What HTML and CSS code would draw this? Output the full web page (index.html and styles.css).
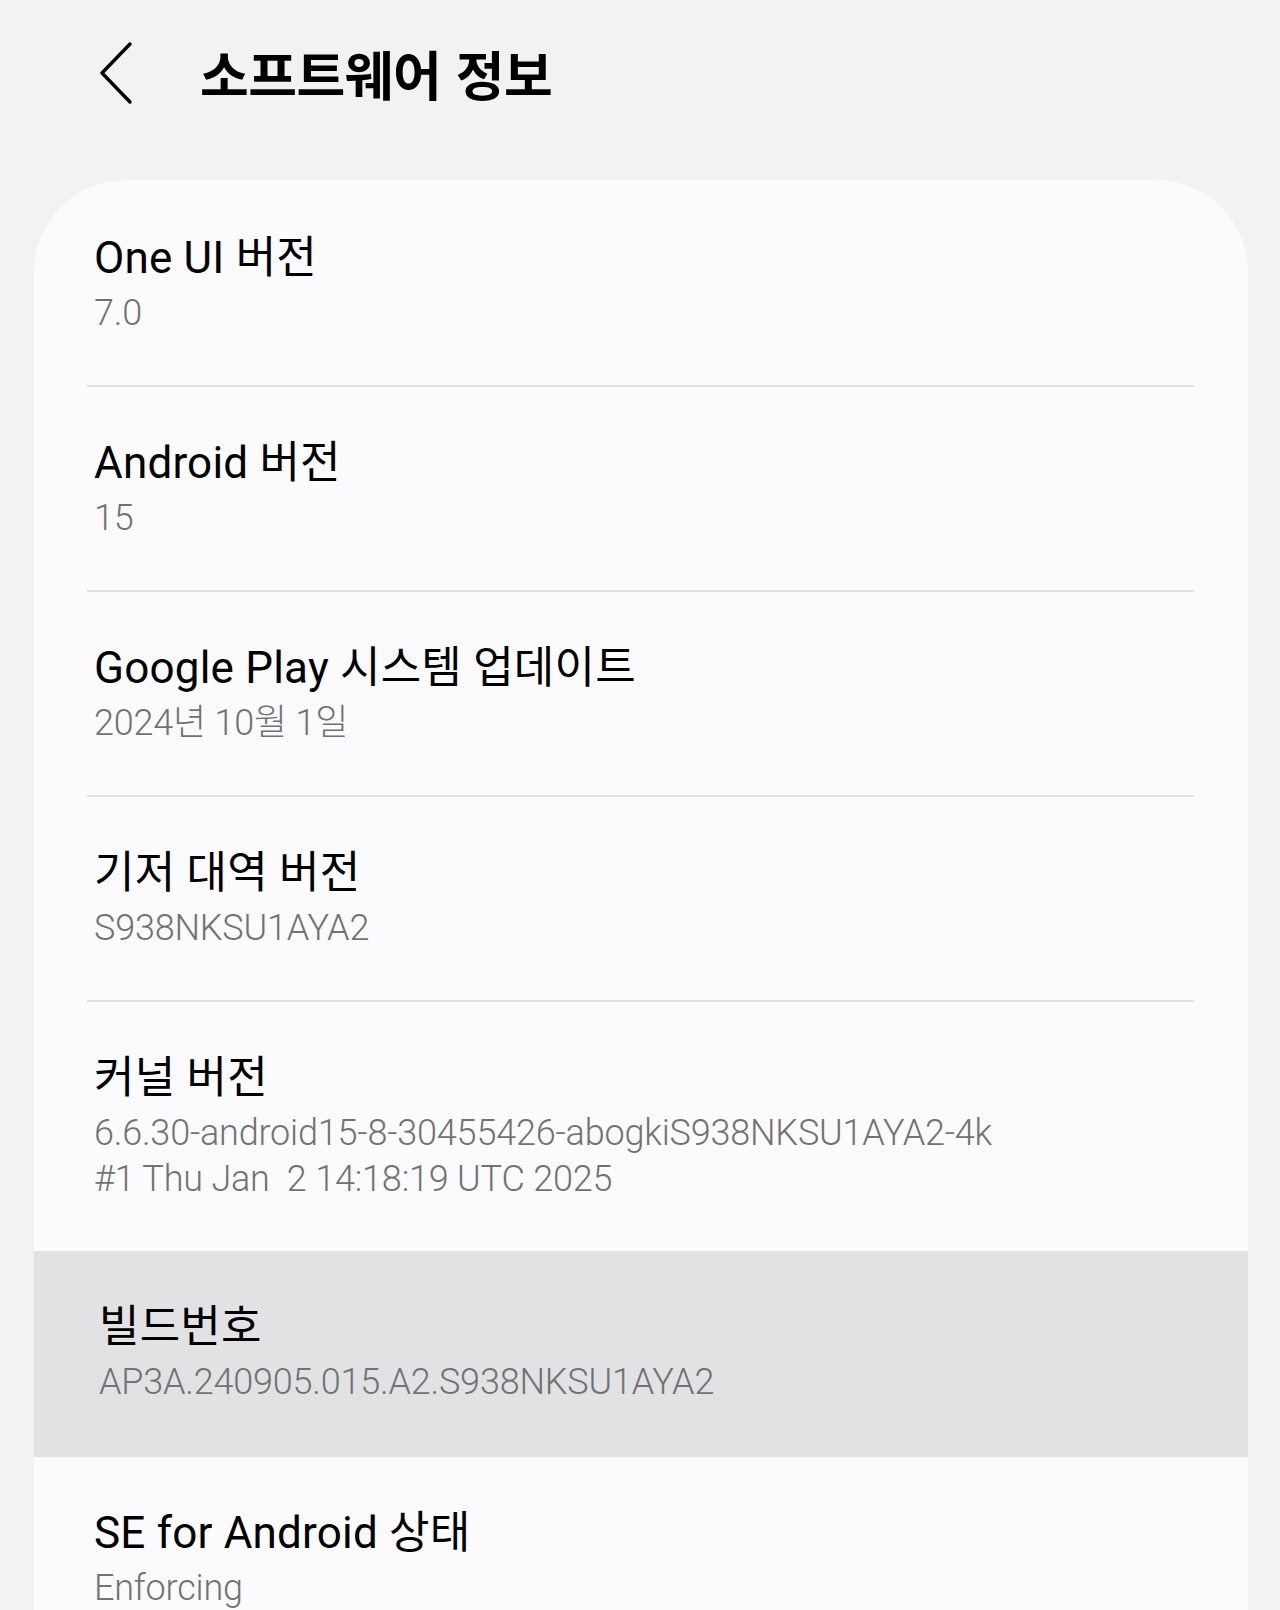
FILE: index.html
```html
<!DOCTYPE html>
<html lang="ko">
<head>
    <meta charset="UTF-8">
    <meta name="viewport" content="width=device-width, initial-scale=1.0">
    <title>소프트웨어 정보</title>
    <link rel="stylesheet" href="styles.css">
</head>
<body>

    <header class="topbar">
        <button class="back-btn" aria-label="뒤로">
            <svg width="40" height="64" viewBox="0 0 40 64">
                <path d="M34 3 L6 32 L34 61" fill="none" stroke="#000" stroke-width="3.4" stroke-linecap="round" stroke-linejoin="round"/>
            </svg>
        </button>
        <h1 class="page-title">소프트웨어 정보</h1>
    </header>

    <main class="card">
        <div class="item">
            <div class="item-title">One UI 버전</div>
            <div class="item-sub">7.0</div>
        </div>
        <div class="divider"></div>

        <div class="item">
            <div class="item-title">Android 버전</div>
            <div class="item-sub">15</div>
        </div>
        <div class="divider"></div>

        <div class="item">
            <div class="item-title">Google Play 시스템 업데이트</div>
            <div class="item-sub">2024년 10월 1일</div>
        </div>
        <div class="divider"></div>

        <div class="item">
            <div class="item-title">기저 대역 버전</div>
            <div class="item-sub">S938NKSU1AYA2</div>
        </div>
        <div class="divider"></div>

        <div class="item">
            <div class="item-title">커널 버전</div>
            <div class="item-sub">6.6.30-android15-8-30455426-abogkiS938NKSU1AYA2-4k<br>#1 Thu Jan&nbsp; 2 14:18:19 UTC 2025</div>
        </div>

        <div class="item item-pressed">
            <div class="item-title">빌드번호</div>
            <div class="item-sub">AP3A.240905.015.A2.S938NKSU1AYA2</div>
        </div>

        <div class="item">
            <div class="item-title">SE for Android 상태</div>
            <div class="item-sub">Enforcing</div>
        </div>
    </main>

</body>
</html>
```

FILE: styles.css
```css
body {
    margin: 0;
    background-color: #f2f2f4;
    font-family: "Roboto", "Noto Sans CJK KR", sans-serif;
    color: #000;
    overflow: hidden;
}

.topbar {
    display: flex;
    align-items: center;
    height: 146px;
    padding-left: 96px;
}

.back-btn {
    display: flex;
    padding: 0;
    background: none;
    border: none;
    cursor: pointer;
}

.page-title {
    margin: 0 0 0 64px;
    font-family: "Noto Sans CJK KR", sans-serif;
    font-size: 53px;
    font-weight: 700;
    letter-spacing: -0.5px;
}

.card {
    margin: 34px 32px 0 34px;
    padding-top: 2px;
    min-height: 1500px;
    background-color: #fbfbfd;
    border-radius: 92px 92px 0 0;
}

.item {
    padding: 46px 58px 49px 60px;
}

.item-title {
    font-size: 44px;
    font-weight: 400;
    line-height: 60px;
    letter-spacing: 0.2px;
    margin-bottom: 2px;
}

.item-sub {
    font-size: 36px;
    font-weight: 300;
    line-height: 46px;
    letter-spacing: -0.2px;
    color: #727274;
}

.item-pressed {
    padding: 46px 58px 52px 65px;
    background-color: #e2e2e4;
}

.divider {
    height: 2px;
    margin: 0 54px 0 53px;
    background-color: #e2e2e4;
}
```
